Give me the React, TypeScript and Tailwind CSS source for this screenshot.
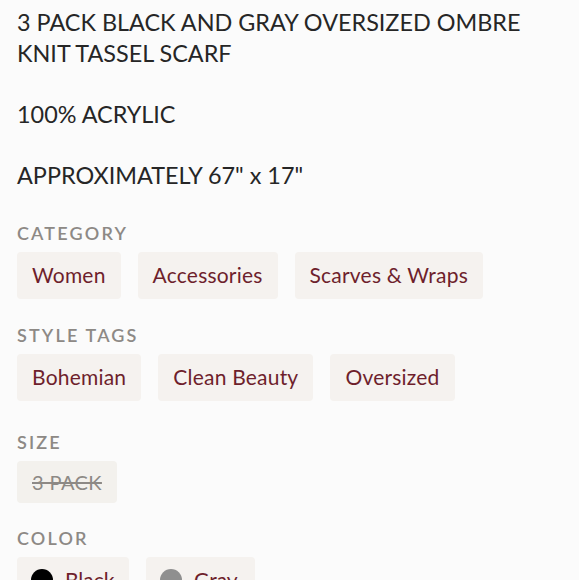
import React from "react";

const categories = ["Women", "Accessories", "Scarves & Wraps"];
const styleTags = ["Bohemian", "Clean Beauty", "Oversized"];
const colors = [
  { name: "Black", swatch: "bg-black" },
  { name: "Gray", swatch: "bg-[#8f8f8f]" },
];

const Label = ({ children }: { children: React.ReactNode }) => (
  <p className="text-[18px] leading-[24px] tracking-[0.12em] text-[#8d8985] font-semibold">
    {children}
  </p>
);

const Chip = ({ children }: { children: React.ReactNode }) => (
  <span className="inline-flex h-[47px] items-center rounded-[4px] bg-[#f5f2ef] px-[15px] text-[21px] tracking-[0.01em] text-[#6e1f2c]">
    {children}
  </span>
);

export default function App() {
  return (
    <div
      className="min-h-screen overflow-hidden bg-[#fbfbfb] px-[17px] pt-[7px]"
      style={{ fontFamily: "Lato, 'Noto Sans', sans-serif" }}
    >
      <div className="whitespace-pre-line text-[23.4px] leading-[30.6px] text-[#262626]">
        {`3 PACK BLACK AND GRAY OVERSIZED OMBRE
KNIT TASSEL SCARF

100% ACRYLIC

APPROXIMATELY 67" x 17"`}
      </div>

      <div className="mt-[30px]">
        <Label>CATEGORY</Label>
        <div className="mt-[7px] flex gap-[17px]">
          {categories.map((c) => (
            <Chip key={c}>{c}</Chip>
          ))}
        </div>
      </div>

      <div className="mt-[24px]">
        <Label>STYLE TAGS</Label>
        <div className="mt-[7px] flex gap-[17px]">
          {styleTags.map((t) => (
            <Chip key={t}>{t}</Chip>
          ))}
        </div>
      </div>

      <div className="mt-[29px]">
        <Label>SIZE</Label>
        <div className="mt-[7px] flex">
          <span className="inline-flex h-[42px] items-center rounded-[4px] bg-[#f3f1ed] px-[15px] text-[20px] tracking-[0.02em] text-[#8d8985] line-through">
            3 PACK
          </span>
        </div>
      </div>

      <div className="mt-[23px]">
        <Label>COLOR</Label>
        <div className="mt-[7px] flex gap-[17px]">
          {colors.map((c) => (
            <span
              key={c.name}
              className="inline-flex h-[47px] w-[112px] items-center gap-[12px] rounded-[4px] bg-[#f5f2ef] px-[14px] text-[21px] text-[#6e1f2c] last:w-[109px]"
            >
              <span className={`h-[22px] w-[22px] rounded-full ${c.swatch}`} />
              {c.name}
            </span>
          ))}
        </div>
      </div>
    </div>
  );
}
